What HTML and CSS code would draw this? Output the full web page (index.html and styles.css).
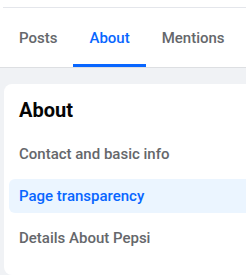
FILE: index.html
```html
<!DOCTYPE html>
<html lang="en">
  <head>
    <meta charset="UTF-8">
    <meta name="viewport" content="width=device-width, initial-scale=1.0">
    <title>Pepsi - About</title>
    <link rel="stylesheet" href="styles.css">
  </head>
<body>
  <div class="top-edge"></div>
  <nav class="tabs">
    <a class="tab" href="#">Posts</a>
    <a class="tab active" href="#">About</a>
    <a class="tab" href="#">Mentions</a>
  </nav>

  <main class="content">
    <section class="card">
      <h2>About</h2>
      <ul class="side-menu">
        <li><a href="#">Contact and basic info</a></li>
        <li class="selected"><a href="#">Page transparency</a></li>
        <li><a href="#">Details About Pepsi</a></li>
      </ul>
    </section>
  </main>
</body>
</html>
```

FILE: styles.css
```css
body {
  margin: 0;
  padding: 0;
  font-family: Roboto, 'Noto Sans', sans-serif;
  background: #fff;
  color: #050505;
  height: 275px;
  overflow: hidden;
  display: flex;
  flex-direction: column;
}

.top-edge {
  height: 7px;
  margin-left: 3px;
  border-bottom: 1px solid #e4e6eb;
}

.tabs {
  display: flex;
  height: 59px;
  padding-left: 3px;
  border-bottom: 1px solid #dddfe2;
}

.tab {
  display: flex;
  align-items: center;
  padding: 0 16px;
  font-size: 15px;
  font-weight: 500;
  color: #65676b;
  text-decoration: none;
  border-bottom: 3px solid transparent;
  padding-top: 3px;
}

.tab.active {
  color: #0866ff;
  border-bottom-color: #0866ff;
}

.content {
  flex: 1;
  background: #f0f2f5;
  padding: 16px 0 0 4px;
}

.card {
  background: #fff;
  border-radius: 8px 0 0 8px;
  height: 100%;
  padding: 14px 0 0 5px;
  box-sizing: border-box;
}

h2 {
  margin: 0 0 15px 10px;
  font-size: 20px;
  line-height: 24px;
  font-weight: 700;
}

.side-menu {
  list-style: none;
  margin: 0;
  padding: 0;
  display: flex;
  flex-direction: column;
  gap: 8px;
}

.side-menu li {
  height: 34px;
  display: flex;
  align-items: center;
  padding-left: 10px;
  border-radius: 6px 0 0 6px;
}

.side-menu a {
  font-size: 15px;
  font-weight: 500;
  color: #65676b;
  text-decoration: none;
}

.side-menu .selected {
  background: #ebf5ff;
}

.side-menu .selected a {
  color: #0866ff;
}
```
